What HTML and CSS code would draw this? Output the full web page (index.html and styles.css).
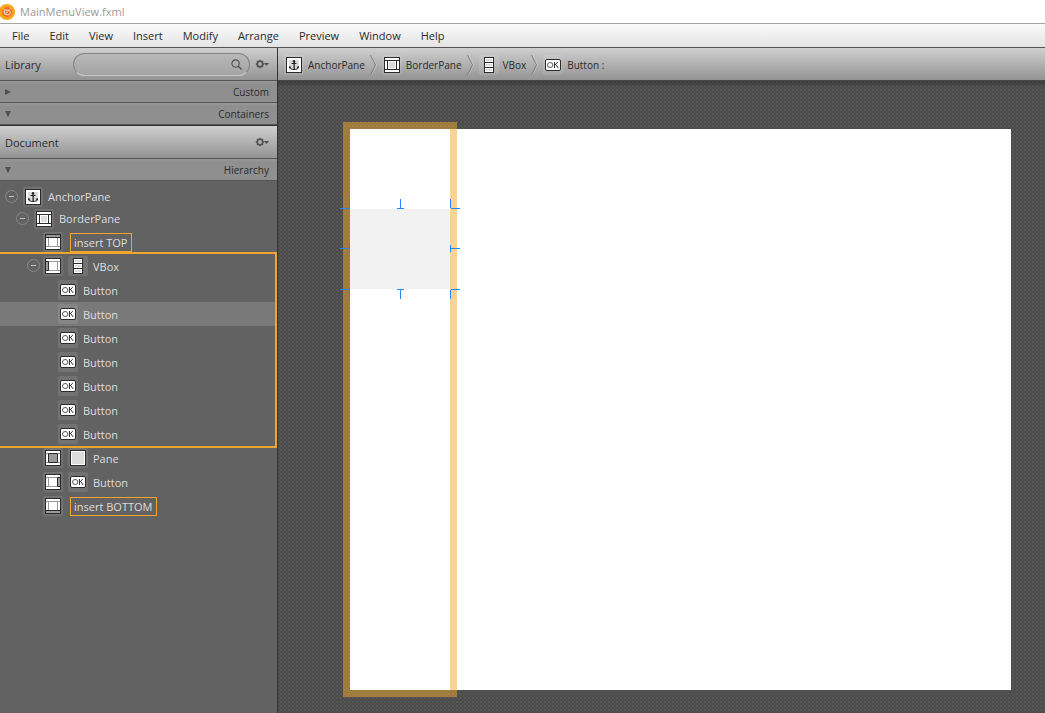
FILE: index.html
```html
<!DOCTYPE html>
<html lang="en">
<head>
<meta charset="utf-8">
<title>MainMenuView.fxml</title>
<link rel="stylesheet" href="styles.css">
</head>
<body>
<svg class="defs" aria-hidden="true">
  <symbol id="anchor" viewBox="0 0 16 16">
    <path fill="#2b2b2b" d="M0 0h16v16H0z"/><path fill="#fff" d="M1 1h14v14H1z"/><path fill="#dcdcdc" d="M3 3h10v10H3z"/>
    <path fill="none" stroke="#222" d="M8 5v8M5.500 6.500h5M3.500 10c.8 1.800 2 2.500 4.500 2.500s3.700-.7 4.500-2.500"/><path fill="none" stroke="#222" stroke-width=".6" d="M8.500 5v7"/><circle cx="8" cy="4.200" r="1.200" fill="#222"/>
    <path fill="#222" d="M3 9l2.500 1L3.300 11.500zM13 9l-2.500 1 2.200 1.500z"/>
  </symbol>
  <symbol id="border" viewBox="0 0 16 16">
    <path fill="#2b2b2b" d="M0 0h16v16H0z"/><path fill="#fff" d="M1 1h14v2H1zM1 13h14v2H1zM1 4h2v8H1zM13 4h2v8h-2zM4 4h8v8H4z"/><path fill="#dcdcdc" d="M5 5h6v6H5z"/>
  </symbol>
  <symbol id="slots" viewBox="0 0 16 16">
    <path fill="#2b2b2b" d="M0 0h16v16H0z"/><path fill="#fff" d="M1 1h14v14H1z"/>
    <path fill="none" stroke="#999" d="M1 3.500h14M1 12.500h14M3.500 4v8M12.500 4v8"/>
  </symbol>
  <symbol id="slot-top" viewBox="0 0 16 16"><use href="#slots"/><path fill="#999" d="M1 1h14v2H1z"/><path fill="#2b2b2b" d="M1 3h14v1H1z"/></symbol>
  <symbol id="slot-left" viewBox="0 0 16 16"><use href="#slots"/><path fill="#999" d="M1 4h2v8H1z"/><path fill="none" stroke="#2b2b2b" d="M1 3.500h2.500v9H1"/></symbol>
  <symbol id="slot-center" viewBox="0 0 16 16"><use href="#slots"/><path fill="#999" stroke="#2b2b2b" d="M3.500 3.500h9v9h-9z"/></symbol>
  <symbol id="slot-right" viewBox="0 0 16 16"><use href="#slots"/><path fill="#999" d="M13 4h2v8h-2z"/><path fill="none" stroke="#2b2b2b" d="M15 3.500h-2.500v9H15"/></symbol>
  <symbol id="slot-bottom" viewBox="0 0 16 16"><use href="#slots"/><path fill="#999" d="M1 13h14v2H1z"/><path fill="#2b2b2b" d="M1 12h14v1H1z"/></symbol>
  <symbol id="vbox" viewBox="0 0 16 16">
    <path fill="#2b2b2b" d="M3 0h10v16H3z"/><path fill="#fff" d="M4 1h8v4H4zM4 6h8v4H4zM4 11h8v4H4z"/><path fill="#dcdcdc" d="M5 2h6v2H5zM5 7h6v2H5zM5 12h6v2H5z"/>
  </symbol>
  <symbol id="pane" viewBox="0 0 16 16">
    <path fill="#2b2b2b" d="M0 0h16v16H0z"/><path fill="#fff" d="M1 1h14v14H1z"/><path fill="#dcdcdc" d="M2 2h12v12H2z"/>
  </symbol>
  <symbol id="ok" viewBox="0 0 16 16">
    <rect x=".5" y="2.500" width="15" height="11" rx="1.500" fill="#fff" stroke="#2b2b2b"/>
    <ellipse cx="5.200" cy="8" rx="2.700" ry="2.500" fill="none" stroke="#444" stroke-width=".9"/>
    <path fill="none" stroke="#333" d="M9.500 5v6M12.800 5L9.800 8.200M10.600 7.400L13.200 11"/>
  </symbol>
  <symbol id="gear" viewBox="0 0 14 10">
    <circle cx="5" cy="5" r="2.700" fill="none" stroke="#505050" stroke-width="1.500"/>
    <path stroke="#505050" stroke-width="1.500" d="M5 .8v1.400M5 7.800v1.400M.8 5h1.400M7.800 5h1.400M2 2l1 1M8 2L7 3M2 8l1-1M8 8L7 7"/>
    <path fill="#505050" d="M9 4h5l-2.500 3z"/>
  </symbol>
  <symbol id="minus" viewBox="0 0 14 14"><circle cx="6.500" cy="6.500" r="6" fill="none" stroke="#888"/><path stroke="#c4c4c4" d="M4 6.500h5"/></symbol>
  <symbol id="chevron" viewBox="0 0 7 20"><path fill="none" stroke="#e0e0e0" stroke-opacity=".45" d="M1.500 0l5 10-5 10"/><path fill="none" stroke="#7c7c7c" d="M.5 0l5 10-5 10"/></symbol>
</svg>

<header class="titlebar">
  <svg class="logo" viewBox="0 0 16 16" aria-hidden="true">
    <circle cx="7" cy="8" r="8" fill="#faa61a"/><circle cx="7" cy="8" r="5" fill="#f4682a"/>
    <ellipse cx="7.300" cy="8.300" rx="3" ry="2.300" fill="#f15a29" stroke="#ffe3cf" transform="rotate(20 7 8)"/>
    <path d="M3 4.500l2.500 2M10.500 4.500L9 6" fill="none" stroke="#ffe3cf" stroke-width=".9"/>
    <circle cx="7" cy="8.300" r="1" fill="#fbc7a4"/>
  </svg>
  <span>MainMenuView.fxml</span>
</header>
<nav class="menubar">
  <button>File</button><button>Edit</button><button>View</button><button>Insert</button><button>Modify</button><button>Arrange</button><button>Preview</button><button>Window</button><button>Help</button>
</nav>
<div class="workspace">
  <aside class="sidebar">
    <div class="panel-head">
      <label for="search">Library</label>
      <div class="search">
        <input id="search" type="text">
        <svg width="11" height="11" viewBox="0 0 12 12" aria-hidden="true"><circle cx="5" cy="5" r="4" fill="none" stroke="#505050" stroke-width="1.200"/><path stroke="#505050" stroke-width="1.500" d="M8 8l3.500 3.500"/></svg>
      </div>
      <button class="gear" aria-label="Library options"><svg><use href="#gear"/></svg></button>
    </div>
    <button class="section"><svg class="tri" viewBox="0 0 6 6"><path d="M0 0l6 3-6 3z"/></svg>Custom</button>
    <button class="section"><svg class="tri" viewBox="0 0 6 6"><path d="M0 0h6L3 6z"/></svg>Containers</button>
    <div class="panel-head">
      <h2>Document</h2>
      <button class="gear" aria-label="Document options"><svg><use href="#gear"/></svg></button>
    </div>
    <button class="section"><svg class="tri" viewBox="0 0 6 6"><path d="M0 0h6L3 6z"/></svg>Hierarchy</button>
    <div class="tree">
      <div class="row root"><button class="toggle" aria-label="Collapse"><svg><use href="#minus"/></svg></button><span class="tile"><svg><use href="#anchor"/></svg></span>AnchorPane</div>
      <div class="row root level1"><button class="toggle" aria-label="Collapse"><svg><use href="#minus"/></svg></button><span class="tile"><svg><use href="#border"/></svg></span>BorderPane</div>
      <div class="row level2"><span class="tile"><svg><use href="#slot-top"/></svg></span><span class="insert">insert TOP</span></div>
      <div class="group">
        <div class="row nested"><button class="toggle" aria-label="Collapse"><svg><use href="#minus"/></svg></button><span class="tile"><svg><use href="#slot-left"/></svg></span><span class="tile"><svg><use href="#vbox"/></svg></span><span class="name">VBox</span></div>
        <div class="row level3"><span class="tile"><svg><use href="#ok"/></svg></span><span class="name">Button</span></div>
        <div class="row level3 selected"><span class="tile"><svg><use href="#ok"/></svg></span><span class="name">Button</span></div>
        <div class="row level3"><span class="tile"><svg><use href="#ok"/></svg></span><span class="name">Button</span></div>
        <div class="row level3"><span class="tile"><svg><use href="#ok"/></svg></span><span class="name">Button</span></div>
        <div class="row level3"><span class="tile"><svg><use href="#ok"/></svg></span><span class="name">Button</span></div>
        <div class="row level3"><span class="tile"><svg><use href="#ok"/></svg></span><span class="name">Button</span></div>
        <div class="row level3"><span class="tile"><svg><use href="#ok"/></svg></span><span class="name">Button</span></div>
      </div>
      <div class="row level2"><span class="tile"><svg><use href="#slot-center"/></svg></span><span class="tile"><svg><use href="#pane"/></svg></span><span class="name">Pane</span></div>
      <div class="row level2"><span class="tile"><svg><use href="#slot-right"/></svg></span><span class="tile"><svg><use href="#ok"/></svg></span><span class="name">Button</span></div>
      <div class="row level2"><span class="tile"><svg><use href="#slot-bottom"/></svg></span><span class="insert">insert BOTTOM</span></div>
    </div>
  </aside>
  <main class="editor">
    <nav class="crumbs">
      <button><span class="tile"><svg><use href="#anchor"/></svg></span>AnchorPane</button>
      <svg class="chevron"><use href="#chevron"/></svg>
      <button><span class="tile"><svg><use href="#border"/></svg></span>BorderPane</button>
      <svg class="chevron"><use href="#chevron"/></svg>
      <button><span class="tile"><svg><use href="#vbox"/></svg></span>VBox</button>
      <svg class="chevron"><use href="#chevron"/></svg>
      <button><span class="tile"><svg><use href="#ok"/></svg></span>Button :</button>
    </nav>
    <div class="canvas">
      <div class="page">
        <div class="parent-ring"></div>
        <div class="widget">
          <svg class="handles" viewBox="0 0 120 100" aria-hidden="true">
            <path fill="none" stroke="#2a84ff" d="M0 9.500h10M9.500 0v9M60.500 0v9M57 9.500h7M110.500 0v9M111 9.500h9M0 49.500h9M9.500 46v7M110.500 46v7M111 49.500h9M0 90.500h10M9.500 91v9M57 90.500h7M60.500 91v9M111 90.500h9M110.500 91v9"/>
          </svg>
        </div>
      </div>
    </div>
  </main>
</div>
</body>
</html>
```
FILE: styles.css
```css
* { box-sizing: border-box; }
html, body { height: 100%; margin: 0; }
body {
  display: flex;
  flex-direction: column;
  overflow: hidden;
  font: 11px/16px "Open Sans", "Noto Sans", sans-serif;
  color: #2b2b2b;
  background: #fff;
}
button { border: 0; padding: 0; margin: 0; background: none; font: inherit; color: inherit; }
svg { display: block; flex: none; }
.defs { position: absolute; width: 0; height: 0; }

.titlebar { display: flex; align-items: center; gap: 4px; height: 23px; color: #999; flex: none; }
.logo { width: 16px; height: 16px; }
.menubar {
  display: flex;
  flex: none;
  gap: 20px;
  height: 25px;
  padding: 0 12px;
  border-top: 1px solid #a5a5a5;
  border-bottom: 1px solid #555;
  background: linear-gradient(#fafafa, #e4e4e4);
}
.workspace { display: flex; flex: 1; min-height: 0; }

.sidebar {
  display: flex;
  flex-direction: column;
  flex: none;
  width: 278px;
  border-right: 1px solid #333;
  background: #626262;
}
.panel-head {
  display: flex;
  align-items: center;
  height: 33px;
  padding: 0 8px 0 5px;
  border-bottom: 1px solid #555;
  background: linear-gradient(#d0d0d0, #939393);
}
.panel-head h2, .panel-head label { margin: 0; padding-top: 2px; font: inherit; }
.search {
  display: flex;
  align-items: center;
  flex: 1;
  height: 23px;
  margin: 0 5px 0 32px;
  padding: 0 7px 0 10px;
  border: 1px solid #858585;
  border-bottom-color: #c4c4c4;
  border-radius: 12px;
  background: linear-gradient(#b9b9b9, #a3a3a3);
}
.search input { flex: 1; min-width: 0; border: 0; outline: 0; background: none; font: inherit; }
.gear { margin-left: auto; }
.gear svg { width: 14px; height: 10px; }
.search + .gear { margin-left: 0; }
.section {
  display: flex;
  align-items: center;
  justify-content: space-between;
  flex: none;
  height: 22px;
  padding: 0 8px 0 5px;
  border-bottom: 1px solid #555;
  background: linear-gradient(#999, #8f8f8f 3px);
  font-size: 10px;
}
.section + .panel-head { border-top: 1px solid #333; height: 34px; }
.tri { width: 6px; height: 6px; fill: #505050; }

.tree { padding-top: 4px; color: #ddd; }
.row { display: flex; align-items: center; gap: 5px; height: 24px; }
.root { height: 23px; padding-left: 5px; }
.root .toggle { margin-right: -1px; }
.toggle svg { width: 14px; height: 14px; }
.level1 { padding-left: 16px; height: 22px; }
.nested { padding-left: 27px; }
.nested .toggle { margin-right: -3px; }
.level2 { padding-left: 43px; }
.level3 { padding-left: 58px; }
.selected { background: #797979; }
.name { padding-top: 2px; }
.tile { display: grid; place-items: center; flex: none; width: 20px; height: 20px; border-radius: 2px; background: rgb(255 255 255 / 10%); }
.tile svg { width: 16px; height: 16px; }
.insert { margin: 1px 0 0 2px; padding: 1px 4px 0 3px; border: 1px solid #f0a52d; }
.group { position: relative; margin: -2px 0; border: 2px solid #f0a52d; border-left: 0; }

.editor { display: flex; flex-direction: column; flex: 1; min-width: 0; }
.crumbs {
  display: flex;
  align-items: center;
  flex: none;
  gap: 5px;
  height: 33px;
  padding: 2px 0 0 6px;
  border-bottom: 1px solid #484848;
  background: linear-gradient(#d0d0d0, #939393);
  font-size: 10px;
}
.crumbs button { display: flex; align-items: center; gap: 4px; }
.chevron { width: 7px; height: 20px; }
.canvas {
  display: flex;
  flex: 1;
  padding: 48px 34px 23px 72px;
  background:
    linear-gradient(rgb(0 0 0 / 25%), transparent 6px),
    conic-gradient(#585858 25%, transparent 0) 0 0 / 4px 4px,
    conic-gradient(#525252 25%, transparent 0) 2px 2px / 4px 4px,
    #4a4a4a;
}
.page { position: relative; flex: 1; background: #fff; }
.parent-ring {
  position: absolute;
  top: -7px;
  bottom: -7px;
  left: -7px;
  width: 114px;
  border: 7px solid rgb(240 170 46 / 50%);
}
.widget { position: absolute; top: 80px; left: 0; width: 100px; height: 80px; background: #f2f2f2; }
.handles { position: absolute; top: -10px; left: -10px; width: 120px; height: 100px; }
```
